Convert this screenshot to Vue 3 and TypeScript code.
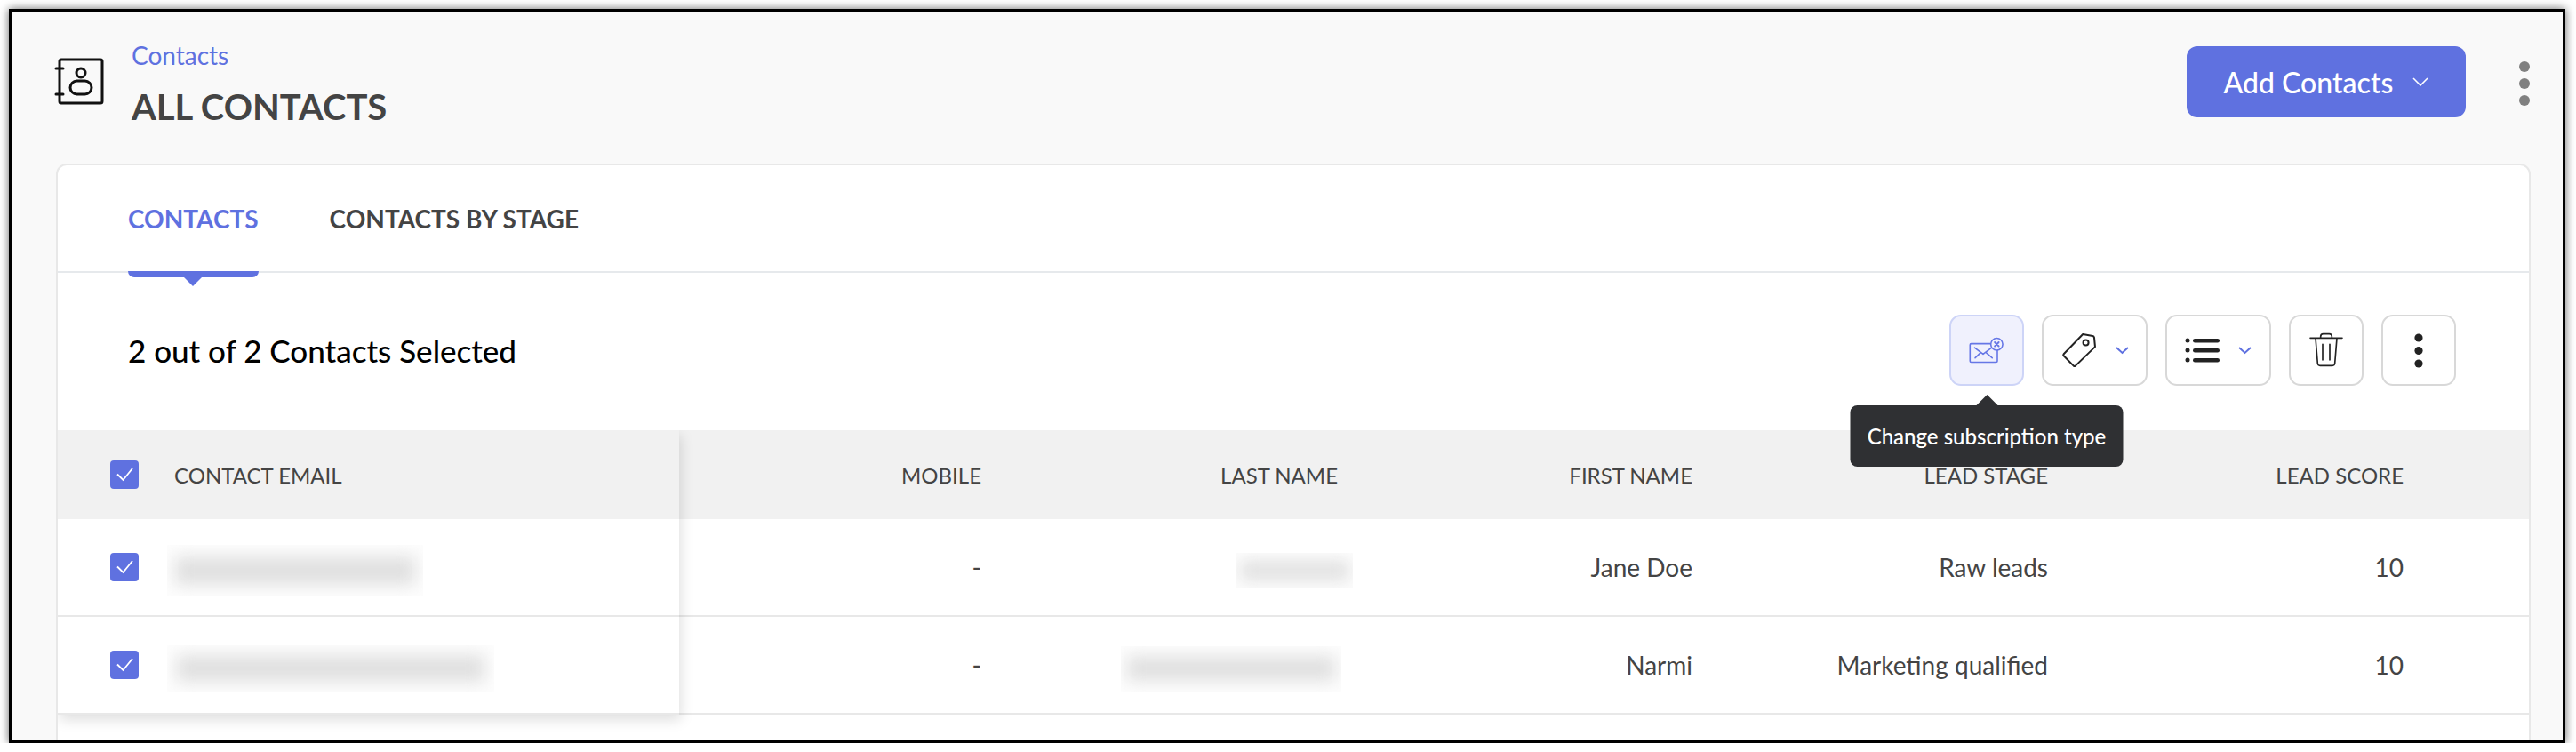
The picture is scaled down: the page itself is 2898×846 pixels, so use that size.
<template>
  <div class="frame">
    <header class="page-head">
      <div class="head-left">
        <svg class="book-icon" width="56" height="54" viewBox="61 65 56 54" fill="none" stroke="#111" stroke-width="3" stroke-linecap="round" stroke-linejoin="round">
          <rect x="67" y="67" width="48" height="49" rx="2" />
          <path d="M63 77h8M63 106h8" />
          <circle cx="91" cy="82" r="5" />
          <rect x="79" y="91" width="24" height="15" rx="7.5" />
        </svg>
        <div class="titles">
          <a class="crumb">Contacts</a>
          <h1>ALL CONTACTS</h1>
        </div>
      </div>
      <div class="head-right">
        <button class="add-btn">
          Add Contacts
          <svg width="18" height="10" viewBox="0 0 18 10" fill="none" stroke="#fff" stroke-width="1.6"><path d="M1 1l8 8 8-8" /></svg>
        </button>
        <div class="head-more"><i></i><i></i><i></i></div>
      </div>
    </header>

    <section class="card">
      <nav class="tabs">
        <span class="tab active">CONTACTS</span>
        <span class="tab">CONTACTS BY STAGE</span>
      </nav>

      <div class="toolbar">
        <div class="selected">2 out of 2 Contacts Selected</div>
        <div class="actions">
          <button class="act act-on">
            <svg width="40" height="32" viewBox="100 93 125 96" fill="none" stroke="#6677e6" stroke-width="5" stroke-linecap="round" stroke-linejoin="round">
              <rect x="104" y="118" width="96" height="65" rx="4" />
              <path d="M120 132l30 23 30-23M122 168l18-17M182 168l-20-17" />
              <circle cx="198" cy="120" r="21" fill="#f0f1fd" />
              <path d="M191 113l14 14M205 113l-14 14" stroke-width="6" />
            </svg>
            <div class="tooltip">Change subscription type</div>
          </button>
          <button class="act act-wide">
            <svg width="42" height="42" viewBox="410 85 125 125" fill="none" stroke="#222" stroke-width="6" stroke-linejoin="round">
              <path d="M485 94l33 6q4 1 5 5l3 31-66 64q-3 2-6 0l-33-34q-3-3 0-6z" />
              <circle cx="495" cy="122" r="9" />
            </svg>
            <svg class="chev" width="15" height="9" viewBox="0 0 15 9" fill="none" stroke="#5f71e0" stroke-width="2"><path d="M1 1l6.500 6 6.500-6" /></svg>
          </button>
          <button class="act act-wide">
            <svg width="40" height="30" viewBox="0 0 40 30" fill="#222">
              <circle cx="3" cy="4" r="2.500" /><circle cx="3" cy="15" r="2.500" /><circle cx="3" cy="26" r="2.500" />
              <rect x="9" y="2" width="30" height="4.500" rx="2.250" /><rect x="9" y="13" width="30" height="4.500" rx="2.250" /><rect x="9" y="24" width="30" height="4.500" rx="2.250" />
            </svg>
            <svg class="chev" width="15" height="9" viewBox="0 0 15 9" fill="none" stroke="#5f71e0" stroke-width="2"><path d="M1 1l6.500 6 6.500-6" /></svg>
          </button>
          <button class="act">
            <svg width="38" height="40" viewBox="297 85 114 120" fill="none" stroke="#222" stroke-width="5" stroke-linecap="round" stroke-linejoin="round">
              <path d="M300 104h108M335 104v-5q0-9 9-9h20q9 0 9 9v5M318 104l7 86q1 7 8 7h42q7 0 8-7l7-86M342 125v53M366 125v53" />
            </svg>
          </button>
          <button class="act">
            <svg width="10" height="39" viewBox="0 0 10 39" fill="#222">
              <circle cx="5" cy="5" r="4.600" /><circle cx="5" cy="19.500" r="4.600" /><circle cx="5" cy="34" r="4.600" />
            </svg>
          </button>
        </div>
      </div>

      <div class="table">
        <div class="frozen">
          <div class="cell-head email-cell">
            <span class="check"><svg width="32" height="32" viewBox="0 0 32 32" fill="none" stroke="#fff" stroke-width="1.8"><path d="M8 15.500l6.500 6.500L25 9" /></svg></span>
            CONTACT EMAIL
          </div>
          <div v-for="row in rows" :key="row.first" class="cell-row email-cell">
            <span class="check"><svg width="32" height="32" viewBox="0 0 32 32" fill="none" stroke="#fff" stroke-width="1.8"><path d="M8 15.500l6.500 6.500L25 9" /></svg></span>
            <span class="redact email-redact" :style="{ width: row.emailW + 'px', height: row.emailH + 'px' }"></span>
          </div>
        </div>
        <div class="rest">
          <div class="cols cell-head">
            <span>MOBILE</span><span>LAST NAME</span><span>FIRST NAME</span><span>LEAD STAGE</span><span>LEAD SCORE</span>
          </div>
          <div v-for="row in rows" :key="row.first" class="cols cell-row">
            <span>-</span>
            <span class="last"><span class="redact" :style="{ width: row.lastW + 'px', height: row.lastH + 'px', marginRight: row.lastShift + 'px' }"></span></span>
            <span>{{ row.first }}</span>
            <span>{{ row.stage }}</span>
            <span>10</span>
          </div>
        </div>
      </div>
    </section>
  </div>
</template>

<script setup lang="ts">
const rows = [
  { first: "Jane Doe", stage: "Raw leads", emailW: 288, emailH: 58, lastW: 131, lastH: 40, lastShift: -17 },
  { first: "Narmi", stage: "Marketing qualified", emailW: 368, emailH: 52, lastW: 248, lastH: 51, lastShift: -4 },
];
</script>

<style>
html,
body {
  margin: 0;
  background: #fff;
}
</style>

<style scoped>
.frame {
  box-sizing: border-box;
  width: 2876px;
  height: 826px;
  margin: 10px 0 0 10px;
  border: 3px solid #000;
  background: #f9f9f9;
  box-shadow: 0 0 10px rgba(0, 0, 0, 0.6);
  overflow: hidden;
  font-family: Lato, "Liberation Sans", sans-serif;
  color: #444;
}

.page-head {
  display: flex;
  justify-content: space-between;
  height: 171px;
  box-sizing: border-box;
  padding: 39px 37px 0 48px;
}

.head-left {
  display: flex;
  gap: 31px;
}

.book-icon {
  margin-top: 13px;
}

.crumb {
  display: block;
  margin-top: -10px;
  font-size: 28px;
  line-height: 40px;
  color: #5f71e0;
}

h1 {
  margin: 14px 0 0;
  font-size: 40px;
  line-height: 48px;
  font-weight: 700;
  color: #444;
}

.head-right {
  display: flex;
  gap: 60px;
  align-items: flex-start;
}

.add-btn {
  display: flex;
  align-items: center;
  justify-content: center;
  gap: 22px;
  width: 314px;
  height: 80px;
  border: 0;
  border-radius: 12px;
  background: #5f71e0;
  color: #fff;
  font: 500 32px Lato, sans-serif;
}

.head-more {
  display: flex;
  flex-direction: column;
  gap: 7px;
  margin-top: 17px;
}

.head-more i {
  width: 12px;
  height: 12px;
  border-radius: 50%;
  background: #808080;
}

.card {
  margin: 0 36px 0 50px;
  height: 700px;
  border: 2px solid #e8e8e8;
  border-radius: 12px;
  background: #fff;
}

.tabs {
  display: flex;
  gap: 80px;
  height: 119px;
  padding-left: 79px;
  border-bottom: 2px solid #e6e9ec;
}

.tab {
  position: relative;
  display: flex;
  align-items: center;
  font-size: 28px;
  font-weight: 700;
  color: #444;
}

.tab.active {
  color: #5f71e0;
}

.tab.active::before {
  content: "";
  position: absolute;
  left: 0;
  right: 0;
  top: 100%;
  height: 7px;
  background: #5f71e0;
  border-radius: 0 0 7px 7px;
}

.tab.active::after {
  content: "";
  position: absolute;
  left: 50%;
  top: calc(100% + 7px);
  margin-left: -10px;
  border: 10px solid transparent;
  border-bottom: 0;
  border-top-color: #5f71e0;
}

.toolbar {
  display: flex;
  justify-content: space-between;
  height: 177px;
  box-sizing: border-box;
  padding: 47px 82px 0 79px;
}

.selected {
  margin-top: 18px;
  font-size: 35px;
  line-height: 44px;
  font-weight: 500;
  color: #000;
}

.actions {
  display: flex;
  gap: 20px;
  align-items: flex-start;
}

.act {
  position: relative;
  box-sizing: border-box;
  display: flex;
  align-items: center;
  justify-content: center;
  width: 84px;
  height: 80px;
  padding: 0;
  border: 2px solid #d8d8d8;
  border-radius: 13px;
  background: #fff;
}

.act-wide {
  width: 119px;
  gap: 20px;
}

.act-on {
  background: #f0f1fd;
  border-color: #cdd4f7;
}

.tooltip {
  position: absolute;
  top: calc(100% + 24px);
  left: 50%;
  z-index: 5;
  transform: translateX(-50%);
  box-sizing: border-box;
  width: 307px;
  height: 69px;
  border-radius: 8px;
  background: #2f3033;
  color: #fff;
  font: 500 24px/69px Lato, sans-serif;
  text-align: center;
  white-space: nowrap;
}

.tooltip::before {
  content: "";
  position: absolute;
  top: -12px;
  left: 50%;
  margin-left: -12px;
  border: 12px solid transparent;
  border-top: 0;
  border-bottom-color: #2f3033;
}

.table {
  display: flex;
}

.frozen {
  position: relative;
  z-index: 2;
  width: 699px;
  flex: none;
  box-shadow: 2px 6px 14px rgba(0, 0, 0, 0.13);
  clip-path: inset(0 -30px -30px 0);
  background: #fff;
}

.rest {
  flex: 1;
}

.cell-head {
  height: 100px;
  background: #f1f1f1;
  font-size: 24px;
  color: #444;
}

.cell-row {
  box-sizing: border-box;
  height: 110px;
  border-bottom: 2px solid #e8e8e8;
  font-size: 28px;
  color: #444;
}

.email-cell {
  display: flex;
  align-items: center;
  padding-left: 59px;
  gap: 40px;
}

.check {
  display: block;
  flex: none;
  width: 32px;
  height: 32px;
  border-radius: 4px;
  background: #5f71e0;
}

.check svg {
  display: block;
}

.cols {
  display: grid;
  grid-template-columns: 340px 401px 399px 400px 400px;
  align-items: center;
  text-align: right;
}

.last {
  display: flex;
  justify-content: flex-end;
}

.redact {
  position: relative;
  display: block;
  background: #fdfdfd;
  overflow: hidden;
  margin-top: 8px;
}

.email-redact {
  margin-left: -8px;
}

.redact::before {
  content: "";
  position: absolute;
  inset: 22% 3%;
  background: #e0e0e0;
  filter: blur(9px);
}
</style>
